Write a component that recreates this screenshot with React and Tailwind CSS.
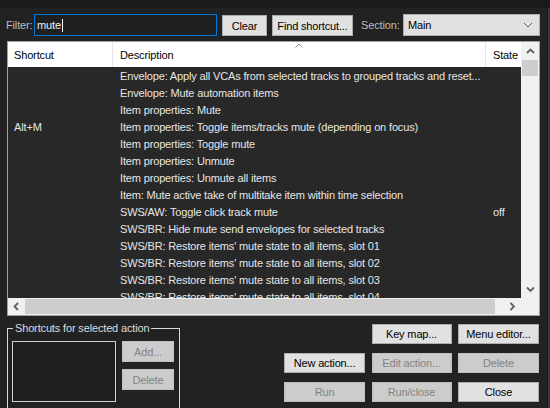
import React from "react";

const rows = [
  { d: "Envelope: Apply all VCAs from selected tracks to grouped tracks and reset..." },
  { d: "Envelope: Mute automation items" },
  { d: "Item properties: Mute" },
  { s: "Alt+M", d: "Item properties: Toggle items/tracks mute (depending on focus)" },
  { d: "Item properties: Toggle mute" },
  { d: "Item properties: Unmute" },
  { d: "Item properties: Unmute all items" },
  { d: "Item: Mute active take of multitake item within time selection" },
  { d: "SWS/AW: Toggle click track mute", st: "off" },
  { d: "SWS/BR: Hide mute send envelopes for selected tracks" },
  { d: "SWS/BR: Restore items' mute state to all items, slot 01" },
  { d: "SWS/BR: Restore items' mute state to all items, slot 02" },
  { d: "SWS/BR: Restore items' mute state to all items, slot 03" },
  { d: "SWS/BR: Restore items' mute state to all items, slot 04" },
];

function Chevron({ dir }) {
  const pts = {
    up: "1,6 4.5,2.5 8,6",
    down: "1,2.5 4.5,6 8,2.5",
    left: "6,1 2.5,4.5 6,8",
    right: "2.5,1 6,4.5 2.5,8",
  }[dir];
  return (
    <svg width="9" height="9" viewBox="0 0 9 9">
      <polyline points={pts} fill="none" stroke="#606060" strokeWidth="1.8" />
    </svg>
  );
}

function Btn({ children, disabled, className = "" }) {
  return (
    <div
      className={
        "flex items-center justify-center border text-[11px] " +
        (disabled
          ? "bg-[#cccccc] border-[#bfbfbf] text-[#838383] "
          : "bg-[#e1e1e1] border-[#adadad] text-black ") +
        className
      }
    >
      {children}
    </div>
  );
}

export default function App() {
  return (
    <div className="w-[550px] h-[408px] overflow-hidden flex flex-col bg-[#222222] font-['Liberation_Sans',Arial,sans-serif] tracking-[-0.15px] text-[11px] leading-[14px]">
      <div className="h-[8px] bg-[#1a1a1a] shrink-0" />
      <div className="flex flex-1 min-h-0">
        <div className="flex-1 flex flex-col">
          {/* Filter row */}
          <div className="flex items-end mt-[6px] h-[22px]">
            <span className="ml-[6px] w-[28px] self-center text-[#bdbdbd]">Filter:</span>
            <div className="w-[183px] h-[22px] border border-[#0078d7] bg-[#1f1f1f] flex items-center pl-[2px] text-[#f0f0f0]">
              mute
              <span className="inline-block w-[1px] h-[13px] bg-white ml-[1px]" />
            </div>
            <Btn className="ml-[5px] w-[45px] h-[21px]">Clear</Btn>
            <Btn className="ml-[5px] w-[81px] h-[21px]">Find shortcut...</Btn>
            <span className="ml-[8px] w-[42px] self-center text-[#bdbdbd]">Section:</span>
            <div className="w-[137px] h-[22px] border border-[#adadad] bg-[#e1e1e1] flex items-center justify-between pl-[4px] pr-[6px] text-black">
              <span>Main</span>
              <svg width="10" height="6" viewBox="0 0 10 6">
                <polyline points="1,1 5,5 9,1" fill="none" stroke="#606060" strokeWidth="1" />
              </svg>
            </div>
          </div>

          {/* List */}
          <div className="ml-[7px] mt-[5px] w-[533px] h-[275px] border border-[#a0a0a0] flex flex-col">
            <div className="flex flex-1 min-h-0">
              <div className="flex-1 flex flex-col min-w-0">
                <div className="h-[25px] bg-white grid grid-cols-[105px_373px_1fr] text-black shrink-0">
                  <div className="flex items-center pl-[6px] border-r border-[#e5e5e5]">Shortcut</div>
                  <div className="relative flex items-center pl-[7px] border-r border-[#e5e5e5]">
                    Description
                    <svg className="absolute top-[1px] left-1/2 -translate-x-1/2" width="9" height="5" viewBox="0 0 9 5">
                      <polyline points="1,4.5 4.5,1 8,4.5" fill="none" stroke="#909090" strokeWidth="1" />
                    </svg>
                  </div>
                  <div className="flex items-center pl-[7px]">State</div>
                </div>
                <div className="flex-1 min-h-0 overflow-hidden bg-[#282828] text-[#e6e6e6]">
                  {rows.map((r, i) => (
                    <div key={i} className="h-[17px] grid grid-cols-[105px_373px_1fr] items-center whitespace-nowrap">
                      <div className="pl-[6px]">{r.s || ""}</div>
                      <div className="pl-[7px] overflow-hidden">{r.d}</div>
                      <div className="pl-[7px]">{r.st || ""}</div>
                    </div>
                  ))}
                </div>
              </div>
              <div className="w-[18px] bg-[#f0f0f0] flex flex-col items-center">
                <div className="h-[18px] flex items-center justify-center">
                  <Chevron dir="up" />
                </div>
                <div className="w-[16px] h-[16px] bg-[#cdcdcd]" />
                <div className="flex-1" />
                <div className="h-[17px] flex items-center justify-center">
                  <Chevron dir="down" />
                </div>
              </div>
            </div>
            <div className="h-[17px] flex bg-[#f0f0f0] shrink-0">
              <div className="w-[17px] flex items-center justify-center">
                <Chevron dir="left" />
              </div>
              <div className="w-[470px] my-[1px] bg-[#cdcdcd]" />
              <div className="flex-1" />
              <div className="w-[17px] flex items-center justify-center">
                <Chevron dir="right" />
              </div>
              <div className="w-[18px]" />
            </div>
          </div>

          {/* Bottom */}
          <div className="flex mt-[5px] items-start">
            <fieldset className="ml-[7px] w-[173px] h-[100px] border border-[#dcdcdc]">
              <legend className="ml-[5px] px-[2px] text-[#dcdcdc] leading-[14px]">Shortcuts for selected action</legend>
              <div className="flex pl-[4px] mt-[6px]">
                <div className="w-[104px] h-[61px] border border-[#d0d0d0] bg-[#1f1f1f]" />
                <div className="ml-[6px] flex flex-col gap-[7px]">
                  <Btn disabled className="w-[52px] h-[21px]">Add...</Btn>
                  <Btn disabled className="w-[52px] h-[21px]">Delete</Btn>
                </div>
              </div>
            </fieldset>
            <div className="ml-auto mr-[8px] mt-[3px] grid grid-cols-[81px_80px_81px] gap-x-[6.5px] gap-y-[9px]">
              <div />
              <Btn className="h-[20px]">Key map...</Btn>
              <Btn className="h-[20px]">Menu editor...</Btn>
              <Btn className="h-[20px]">New action...</Btn>
              <Btn disabled className="h-[20px]">Edit action...</Btn>
              <Btn disabled className="h-[20px]">Delete</Btn>
              <Btn disabled className="h-[20px]">Run</Btn>
              <Btn disabled className="h-[20px]">Run/close</Btn>
              <Btn className="h-[20px] border-[#5a5a5a]">Close</Btn>
            </div>
          </div>
        </div>
        <div className="w-[3px] flex">
          <div className="w-[1px] bg-[#1a1a1a]" />
          <div className="w-[2px] bg-[#3a3a3a]" />
        </div>
      </div>
    </div>
  );
}
